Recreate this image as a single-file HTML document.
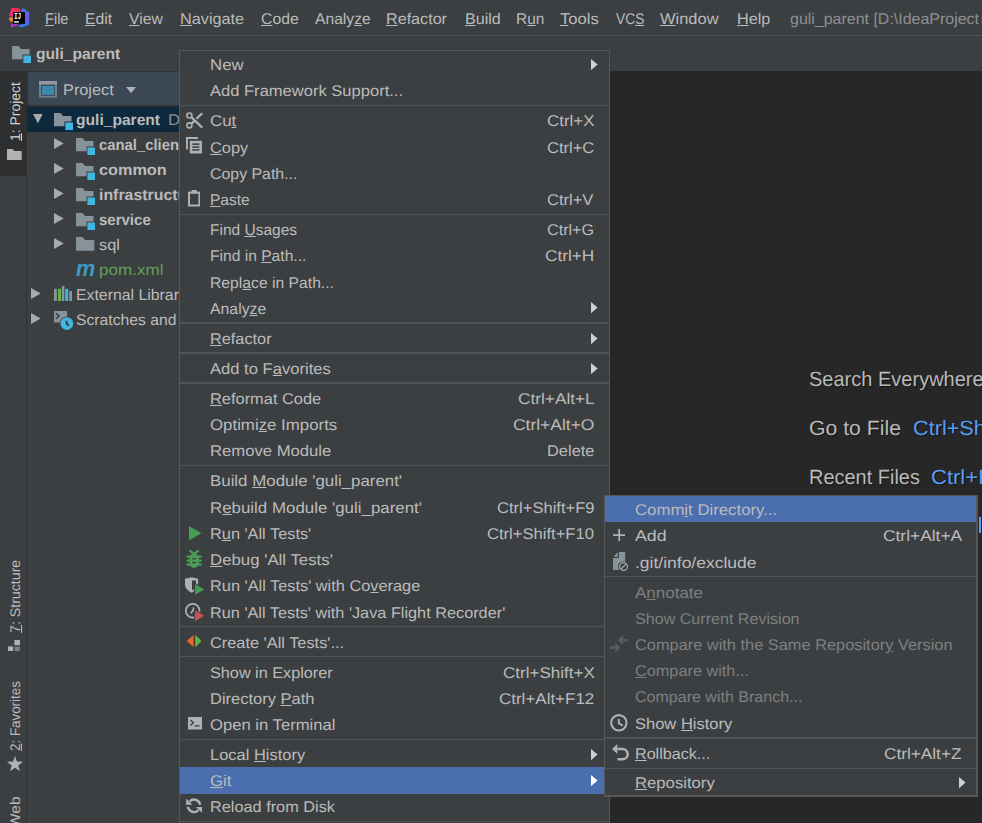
<!DOCTYPE html>
<html><head><meta charset='utf-8'><title>guli_parent</title>
<style>
html,body{margin:0;padding:0;background:#3c3f41}
body{width:982px;height:823px;overflow:hidden;position:relative;color:#bbbbbb}
.a{position:absolute;white-space:nowrap}
.t{position:absolute;white-space:nowrap;transform-origin:0 0}
.fm{font:15.5px/1 'Liberation Sans',sans-serif;text-rendering:geometricPrecision}
.fmb{font:bold 15.5px/1 'Liberation Sans',sans-serif;text-rendering:geometricPrecision}
.fbar{font:15.5px/1 'Liberation Sans',sans-serif;text-rendering:geometricPrecision}
.fed{font:20.6px/1 'Liberation Sans',sans-serif;text-rendering:geometricPrecision}
.fv{font:14px/1 'Liberation Sans',sans-serif;text-rendering:geometricPrecision}
.fmi{font:italic bold 23px/1 'Liberation Sans',sans-serif;text-rendering:geometricPrecision}
</style></head>
<body>
<!-- menu bar -->
<div class='a' style='left:0px;top:35px;width:982px;height:1px;background:#515151;'></div>
<span class='t fbar' style='left:44.7px;top:12px;transform:scaleX(0.940);'><u>F</u>ile</span>
<span class='t fbar' style='left:85.3px;top:12px;transform:scaleX(1.011);'><u>E</u>dit</span>
<span class='t fbar' style='left:129.0px;top:12px;transform:scaleX(1.018);'><u>V</u>iew</span>
<span class='t fbar' style='left:180.4px;top:12px;transform:scaleX(1.048);'><u>N</u>avigate</span>
<span class='t fbar' style='left:261.4px;top:12px;transform:scaleX(1.016);'><u>C</u>ode</span>
<span class='t fbar' style='left:315.1px;top:12px;transform:scaleX(1.009);'>Analy<u>z</u>e</span>
<span class='t fbar' style='left:386.4px;top:12px;transform:scaleX(1.041);'><u>R</u>efactor</span>
<span class='t fbar' style='left:465.3px;top:12px;transform:scaleX(1.038);'><u>B</u>uild</span>
<span class='t fbar' style='left:515.7px;top:12px;transform:scaleX(0.996);'>R<u>u</u>n</span>
<span class='t fbar' style='left:560.4px;top:12px;transform:scaleX(1.075);'><u>T</u>ools</span>
<span class='t fbar' style='left:616.3px;top:12px;transform:scaleX(0.888);'>VC<u>S</u></span>
<span class='t fbar' style='left:660.3px;top:12px;transform:scaleX(1.062);'><u>W</u>indow</span>
<span class='t fbar' style='left:736.9px;top:12px;transform:scaleX(1.047);'><u>H</u>elp</span>
<span class='t fbar' style='left:789.8px;top:12px;color:#8e9092;transform:scaleX(1.030);'>guli_parent [D:\IdeaProject</span><span class='t fbar' style='left:981.0px;top:12px;color:#8e9092;transform:scaleX(0.859);'>s\guli_parent]</span>
<svg class='a' style='left:8px;top:7px' width='22' height='22' viewBox='0 0 22 22'><defs><linearGradient id='lg1' x1='0' y1='0' x2='0' y2='1'><stop offset='0' stop-color='#3a78ee'/><stop offset='0.45' stop-color='#7256e8'/><stop offset='1' stop-color='#2a7df0'/></linearGradient><linearGradient id='lg2' x1='0' y1='0' x2='0' y2='1'><stop offset='0' stop-color='#fe2857'/><stop offset='1' stop-color='#e8308a'/></linearGradient></defs>
<polygon points='3.8,0.9 10.6,1.25 13,4.5 5.2,5.2 4.8,9.9 1.1,8.6 2.8,3.1' fill='url(#lg2)'/>
<polygon points='1.4,10.6 4.8,9.9 4.8,14.7 3.1,15 0.9,12.6' fill='#fc801d'/>
<polygon points='15,0.9 21.2,5.5 21.2,17.4 13.7,20.8 9.3,18.4 16.7,16.7 16.7,5.2 13,4.5 13,3.5' fill='url(#lg1)'/>
<polygon points='3.1,16.7 9.3,17.1 9.3,18.4 2.8,20.5' fill='#b030d0'/>
<rect x='5' y='5.2' width='11.9' height='11.5' fill='#000'/>
<rect x='6' y='14.2' width='5' height='1.5' fill='#e8e8e8'/>
<text x='5.9' y='11.9' font-size='8.8' font-weight='bold' fill='#fff' font-family='Liberation Mono, monospace' textLength='7.4' lengthAdjust='spacingAndGlyphs'>IJ</text></svg>
<!-- navigation bar -->
<svg class='a' style='left:12.2px;top:45.8px' width='19' height='17.1' viewBox='0 0 19 17.1'><path d='M0,0 H6.5 L9,3 H17.5 V8.5 H10.5 V13.2 H0 Z' fill='#87939a'/><rect x='11.4' y='9.5' width='7.6' height='7.6' fill='#40b6e0'/></svg>
<span class='t fmb' style='left:35.6px;top:47px;transform:scaleX(1.007);'>guli_parent</span>
<div class='a' style='left:0px;top:71px;width:982px;height:1px;background:#323232;'></div>
<!-- left tool window strip -->
<div class='a' style='left:0px;top:71px;width:27px;height:104.5px;background:#2d2f30;'></div>
<div class='a' style='left:26px;top:175.5px;width:1px;height:648px;background:#323335;'></div>
<span class='t fv' style='left:7.5px;top:140.6px;color:#d3d3d3;transform:rotate(-90deg) scaleX(0.997);'><u>1</u>: Project</span>
<svg class='a' style='left:7px;top:148.6px' width='14.7' height='11.6' viewBox='0 0 14.7 11.6'><path d='M0,0 H5.5 L7.5,2 H14.7 V11.6 H0 Z' fill='#afb1b3'/></svg>
<span class='t fv' style='left:7.5px;top:632.9px;transform:rotate(-90deg) scaleX(1.012);'><u>7</u>: Structure</span>
<svg class='a' style='left:8.3px;top:639.6px' width='12.3' height='11.6' viewBox='0 0 12.3 11.6'><rect x='6.4' y='0' width='5.6' height='5.2' fill='#afb1b3'/><rect x='0' y='6.4' width='5.2' height='5.2' fill='#afb1b3'/><rect x='6.6' y='6.6' width='5.2' height='5' fill='#7e8183'/></svg>
<span class='t fv' style='left:7.5px;top:750.7px;transform:rotate(-90deg) scaleX(0.955);'><u>2</u>: Favorites</span>
<svg class='a' style='left:6.6px;top:756.3px' width='16' height='15.3' viewBox='0 0 16 15.3'><polygon points='8,0 10,5.6 16,5.8 11.3,9.4 13,15.3 8,11.8 3,15.3 4.7,9.4 0,5.8 6,5.6' fill='#afb1b3'/></svg>
<span class='t fv' style='left:7.5px;top:828.0px;transform:rotate(-90deg) scaleX(1.107);'>Web</span>
<!-- project tool window -->
<div class='a' style='left:28px;top:72px;width:151px;height:33.3px;background:#3b4754;'></div>
<div class='a' style='left:27px;top:72px;width:1px;height:35px;background:#2e3133;'></div>
<div class='a' style='left:27px;top:105.3px;width:152px;height:1.7px;background:#2c3033;'></div>
<svg class='a' style='left:39px;top:81.3px' width='18' height='16.6' viewBox='0 0 18 16.6'><rect x='0' y='0' width='18' height='16.6' fill='#73808b'/><rect x='0' y='0' width='18' height='3.7' fill='#8c98a2'/><rect x='2.1' y='3.7' width='13.8' height='11.1' fill='#364250'/><rect x='3' y='4.9' width='12.2' height='9' fill='#3e8aab'/></svg>
<span class='t fm' style='left:63.1px;top:83px;transform:scaleX(1.052);'>Project</span>
<svg class='a' style='left:125.9px;top:87.3px' width='10.1' height='6.1' viewBox='0 0 10.1 6.1'><polygon points='0,0 10.1,0 5.05,6.1' fill='#afb1b3'/></svg>
<div class='a' style='left:27px;top:107px;width:152px;height:25px;background:#0d293e;'></div>
<svg class='a' style='left:32.6px;top:114.4px' width='9.8' height='9.2' viewBox='0 0 9.8 9.2'><polygon points='0,0 9.8,0 4.9,9.2' fill='#a8aaab'/></svg>
<svg class='a' style='left:54px;top:112.5px' width='19' height='17.1' viewBox='0 0 19 17.1'><path d='M0,0 H6.5 L9,3 H17.5 V8.5 H10.5 V13.2 H0 Z' fill='#87939a'/><rect x='11.4' y='9.5' width='7.6' height='7.6' fill='#40b6e0'/></svg>
<span class='t fmb' style='left:76.4px;top:113px;transform:scaleX(1.006);'>guli_parent</span>
<span class='t fm' style='left:167.9px;top:113px;color:#8e9092;transform:scaleX(1.080);'>D:\IdeaProjects\guli_parent</span>
<svg class='a' style='left:53.9px;top:138.3px' width='9.7' height='11' viewBox='0 0 9.7 11'><polygon points='0,0 9.7,5.5 0,11' fill='#a8aaab'/></svg>
<svg class='a' style='left:75.9px;top:137.7px' width='19' height='17.1' viewBox='0 0 19 17.1'><path d='M0,0 H6.5 L9,3 H17.5 V8.5 H10.5 V13.2 H0 Z' fill='#87939a'/><rect x='11.4' y='9.5' width='7.6' height='7.6' fill='#40b6e0'/></svg>
<span class='t fmb' style='left:99.4px;top:138px;transform:scaleX(0.957);'>canal_client</span>
<svg class='a' style='left:53.9px;top:163.3px' width='9.7' height='11' viewBox='0 0 9.7 11'><polygon points='0,0 9.7,5.5 0,11' fill='#a8aaab'/></svg>
<svg class='a' style='left:75.9px;top:162.7px' width='19' height='17.1' viewBox='0 0 19 17.1'><path d='M0,0 H6.5 L9,3 H17.5 V8.5 H10.5 V13.2 H0 Z' fill='#87939a'/><rect x='11.4' y='9.5' width='7.6' height='7.6' fill='#40b6e0'/></svg>
<span class='t fmb' style='left:99.4px;top:163px;transform:scaleX(1.048);'>common</span>
<svg class='a' style='left:53.9px;top:188.3px' width='9.7' height='11' viewBox='0 0 9.7 11'><polygon points='0,0 9.7,5.5 0,11' fill='#a8aaab'/></svg>
<svg class='a' style='left:75.9px;top:187.7px' width='19' height='17.1' viewBox='0 0 19 17.1'><path d='M0,0 H6.5 L9,3 H17.5 V8.5 H10.5 V13.2 H0 Z' fill='#87939a'/><rect x='11.4' y='9.5' width='7.6' height='7.6' fill='#40b6e0'/></svg>
<span class='t fmb' style='left:98.6px;top:188px;transform:scaleX(1.025);'>infrastructure</span>
<svg class='a' style='left:53.9px;top:213.3px' width='9.7' height='11' viewBox='0 0 9.7 11'><polygon points='0,0 9.7,5.5 0,11' fill='#a8aaab'/></svg>
<svg class='a' style='left:75.9px;top:212.7px' width='19' height='17.1' viewBox='0 0 19 17.1'><path d='M0,0 H6.5 L9,3 H17.5 V8.5 H10.5 V13.2 H0 Z' fill='#87939a'/><rect x='11.4' y='9.5' width='7.6' height='7.6' fill='#40b6e0'/></svg>
<span class='t fmb' style='left:99.4px;top:213px;transform:scaleX(0.968);'>service</span>
<svg class='a' style='left:53.9px;top:238.3px' width='9.7' height='11' viewBox='0 0 9.7 11'><polygon points='0,0 9.7,5.5 0,11' fill='#a8aaab'/></svg>
<svg class='a' style='left:75.9px;top:237.3px' width='19' height='14' viewBox='0 0 19 14'><path d='M0,0 H6.5 L9,3 H18.3 V13.8 H0 Z' fill='#87939a'/></svg>
<span class='t fm' style='left:99.4px;top:238px;transform:scaleX(1.058);'>sql</span>
<span class='t fmi' style='left:75.6px;top:257px;color:#3a9bc4;transform:scaleX(0.940);'>m</span>
<span class='t fm' style='left:98.6px;top:263px;color:#5fa157;transform:scaleX(1.100);'>pom.xml</span>
<svg class='a' style='left:31.4px;top:288.1px' width='9.7' height='11' viewBox='0 0 9.7 11'><polygon points='0,0 9.7,5.5 0,11' fill='#a8aaab'/></svg>
<svg class='a' style='left:53.9px;top:286px' width='18' height='15.1' viewBox='0 0 18 15.1'><rect x='0' y='2.8' width='2.9' height='12.3' fill='#87939a'/><rect x='4' y='2.8' width='3' height='12.3' fill='#62b543'/><rect x='7.8' y='0' width='2.6' height='15.1' fill='#87939a'/><rect x='11.3' y='2.8' width='2.9' height='12.3' fill='#40b6e0'/><rect x='15.2' y='5' width='2.8' height='10.1' fill='#87939a'/></svg>
<span class='t fm' style='left:76.3px;top:288px;transform:scaleX(1.021);'>External Libraries</span>
<svg class='a' style='left:31.4px;top:313.3px' width='9.7' height='11' viewBox='0 0 9.7 11'><polygon points='0,0 9.7,5.5 0,11' fill='#a8aaab'/></svg>
<svg class='a' style='left:53.9px;top:311px' width='20.2' height='19.9' viewBox='0 0 20.2 19.9'><rect x='0' y='0' width='13.1' height='11.4' fill='#87939a'/><path d='M1.9,2.3 L5.2,5 L1.9,7.8' stroke='#2f3436' fill='none' stroke-width='1.3'/><circle cx='12.9' cy='12.6' r='7.2' fill='#3c3f41'/><circle cx='12.9' cy='12.6' r='6.4' fill='#40b6e0'/><path d='M12.5,9.9 L12.8,12.9 L14.9,14.7' stroke='#26323a' fill='none' stroke-width='1.6'/></svg>
<span class='t fm' style='left:75.7px;top:313px;transform:scaleX(1.014);'>Scratches and Consoles</span>
<!-- editor empty state -->
<div class='a' style='left:610px;top:71px;width:372px;height:752px;background:#272727;'></div>
<span class='t fed' style='left:808.8px;top:370px;color:#b9b9b9;transform:scaleX(0.972);text-shadow:1px 1px 0 #141414;'>Search Everywhere</span><span class='t fed' style='left:1001.0px;top:370px;color:#589df6;transform:scaleX(1.000);text-shadow:1px 1px 0 #141414;'>Double Shift</span>
<span class='t fed' style='left:808.8px;top:419px;color:#b9b9b9;transform:scaleX(1.030);text-shadow:1px 1px 0 #141414;'>Go to File</span><span class='t fed' style='left:912.8px;top:419px;color:#589df6;transform:scaleX(1.052);text-shadow:1px 1px 0 #141414;'>Ctrl+Shift+N</span>
<span class='t fed' style='left:808.8px;top:468px;color:#b9b9b9;transform:scaleX(0.969);text-shadow:1px 1px 0 #141414;'>Recent Files</span><span class='t fed' style='left:930.6px;top:468px;color:#589df6;transform:scaleX(1.070);text-shadow:1px 1px 0 #141414;'>Ctrl+E</span>
<span class='t fed' style='left:808.8px;top:517px;color:#b9b9b9;transform:scaleX(1.000);text-shadow:1px 1px 0 #141414;'>Navigation Bar</span>
<div class='a' style='left:979px;top:517px;width:2.4px;height:16px;background:#589df6;'></div>
<!-- project view context menu -->
<div class='a' style='left:179px;top:50px;width:431px;height:810px;background:#3c3f41;border:solid #555759;border-width:1px;box-sizing:border-box'></div>
<span class='t fm' style='left:209.7px;top:58px;transform:scaleX(1.085);'>New</span>
<svg class='a' style='left:591px;top:58.5px' width='6.6' height='11.2' viewBox='0 0 6.6 11.2'><polygon points='0,0 6.6,5.6 0,11.2' fill='#cfcfcf'/></svg>
<span class='t fm' style='left:209.7px;top:84px;transform:scaleX(1.067);'>Add Framework Support...</span>
<div class='a' style='left:180px;top:105px;width:429px;height:1px;background:#525354;'></div>
<svg class='a' style='left:185.7px;top:111.5px' width='17' height='17' viewBox='0 0 17 17'><circle cx='3.4' cy='3.5' r='2.5' fill='none' stroke='#afb1b3' stroke-width='1.6'/><circle cx='3.4' cy='13.4' r='2.5' fill='none' stroke='#afb1b3' stroke-width='1.6'/><path d='M5.2,5 L16.3,15.6 M5.2,11.9 L9,8.3 M10.6,6.8 L16.3,1.2' stroke='#afb1b3' stroke-width='2.3' fill='none'/></svg>
<span class='t fm' style='left:209.7px;top:114px;transform:scaleX(1.089);'>Cu<u>t</u></span><span class='t fm' style='left:547.4px;top:114px;transform:scaleX(1.091);'>Ctrl+X</span>
<svg class='a' style='left:186px;top:137px' width='16' height='16.6' viewBox='0 0 16 16.6'><path d='M0,0 H12 V2 H1.9 V12.6 H0 Z' fill='#afb1b3'/><rect x='3.8' y='3.8' width='12.1' height='12.7' fill='#afb1b3'/><rect x='6.2' y='6.4' width='7.2' height='1.5' fill='#3c3f41'/><rect x='6.2' y='9.3' width='7.2' height='1.5' fill='#3c3f41'/><rect x='6.2' y='12.2' width='7.2' height='1.5' fill='#3c3f41'/></svg>
<span class='t fm' style='left:209.7px;top:141px;transform:scaleX(1.059);'><u>C</u>opy</span><span class='t fm' style='left:547.4px;top:141px;transform:scaleX(1.066);'>Ctrl+C</span>
<span class='t fm' style='left:209.7px;top:167px;transform:scaleX(1.025);'>Copy Path...</span>
<svg class='a' style='left:187.7px;top:190.4px' width='12.4' height='16.5' viewBox='0 0 12.4 16.5'><rect x='1' y='2.6' width='10.4' height='12.9' fill='none' stroke='#afb1b3' stroke-width='2'/><rect x='3.6' y='0' width='5.2' height='3.4' fill='#afb1b3'/></svg>
<span class='t fm' style='left:209.7px;top:193px;transform:scaleX(1.003);'><u>P</u>aste</span><span class='t fm' style='left:547.4px;top:193px;transform:scaleX(1.066);'>Ctrl+V</span>
<div class='a' style='left:180px;top:214px;width:429px;height:1px;background:#525354;'></div>
<span class='t fm' style='left:209.7px;top:223px;transform:scaleX(1.001);'>Find <u>U</u>sages</span><span class='t fm' style='left:547.4px;top:223px;transform:scaleX(1.042);'>Ctrl+G</span>
<span class='t fm' style='left:209.7px;top:249px;transform:scaleX(1.007);'>Find in <u>P</u>ath...</span><span class='t fm' style='left:545.4px;top:249px;transform:scaleX(1.111);'>Ctrl+H</span>
<span class='t fm' style='left:209.7px;top:276px;transform:scaleX(1.013);'>Repl<u>a</u>ce in Path...</span>
<span class='t fm' style='left:209.7px;top:302px;transform:scaleX(1.020);'>Analy<u>z</u>e</span>
<svg class='a' style='left:591px;top:302.4px' width='6.6' height='11.2' viewBox='0 0 6.6 11.2'><polygon points='0,0 6.6,5.6 0,11.2' fill='#cfcfcf'/></svg>
<div class='a' style='left:180px;top:322px;width:429px;height:2px;background:#525354;'></div>
<span class='t fm' style='left:209.7px;top:332px;transform:scaleX(1.051);'><u>R</u>efactor</span>
<svg class='a' style='left:591px;top:332.7px' width='6.6' height='11.2' viewBox='0 0 6.6 11.2'><polygon points='0,0 6.6,5.6 0,11.2' fill='#cfcfcf'/></svg>
<div class='a' style='left:180px;top:352px;width:429px;height:2px;background:#525354;'></div>
<span class='t fm' style='left:209.7px;top:362px;transform:scaleX(1.070);'>Add to F<u>a</u>vorites</span>
<svg class='a' style='left:591px;top:362.5px' width='6.6' height='11.2' viewBox='0 0 6.6 11.2'><polygon points='0,0 6.6,5.6 0,11.2' fill='#cfcfcf'/></svg>
<div class='a' style='left:180px;top:382px;width:429px;height:2px;background:#525354;'></div>
<span class='t fm' style='left:209.7px;top:392px;transform:scaleX(1.058);'><u>R</u>eformat Code</span><span class='t fm' style='left:517.5px;top:392px;transform:scaleX(1.113);'>Ctrl+Alt+L</span>
<span class='t fm' style='left:209.7px;top:418px;transform:scaleX(1.086);'>Optimi<u>z</u>e Imports</span><span class='t fm' style='left:513.3px;top:418px;transform:scaleX(1.125);'>Ctrl+Alt+O</span>
<span class='t fm' style='left:209.7px;top:444px;transform:scaleX(1.075);'>Remove Module</span><span class='t fm' style='left:546.6px;top:444px;transform:scaleX(1.059);'>Delete</span>
<div class='a' style='left:180px;top:465px;width:429px;height:1px;background:#525354;'></div>
<span class='t fm' style='left:209.7px;top:474px;transform:scaleX(1.088);'>Build <u>M</u>odule 'guli_parent'</span>
<span class='t fm' style='left:209.7px;top:501px;transform:scaleX(1.089);'>R<u>e</u>build Module 'guli_parent'</span><span class='t fm' style='left:497.1px;top:501px;transform:scaleX(1.068);'>Ctrl+Shift+F9</span>
<svg class='a' style='left:188.9px;top:525.6px' width='12.3' height='14.6' viewBox='0 0 12.3 14.6'><polygon points='0,0 12.3,7.3 0,14.6' fill='#499c54'/></svg>
<span class='t fm' style='left:209.7px;top:527px;transform:scaleX(1.053);'>R<u>u</u>n 'All Tests'</span><span class='t fm' style='left:487.3px;top:527px;transform:scaleX(1.070);'>Ctrl+Shift+F10</span>
<svg class='a' style='left:186px;top:550px' width='16.2' height='18' viewBox='0 0 16.2 18'><rect x='3.3' y='3.3' width='9.6' height='14.7' rx='4.8' ry='5.6' fill='#499c54'/><path d='M4.1,0.9 L7.6,3.6 M12.1,0.9 L8.6,3.6 M1.4,6.6 H14.8 M1.4,10.6 H14.8 M1.4,14.6 H14.8' stroke='#499c54' stroke-width='2.2' stroke-linecap='round'/><rect x='6.1' y='8.1' width='3.9' height='1.3' fill='#3c3f41'/><rect x='6.1' y='11.9' width='3.9' height='1.3' fill='#3c3f41'/></svg>
<span class='t fm' style='left:209.7px;top:553px;transform:scaleX(1.084);'><u>D</u>ebug 'All Tests'</span>
<svg class='a' style='left:184.9px;top:577px' width='21' height='20' viewBox='0 0 21 20'><path d='M0,1.7 L6.6,0.2 L13.1,1.7 V7.5 Q13.1,12.5 6.6,15.7 Q0,12.5 0,7.5 Z' fill='#afb1b3'/><path d='M7,3.4 H11 V8 Q11,11.5 7,13.4 Z' fill='#3c3f41'/><polygon points='9.2,5.2 9.2,19.6 20.9,12.4' fill='#3c3f41'/><polygon points='10.1,6.9 10.1,17.85 19.1,12.4' fill='#499c54'/></svg>
<span class='t fm' style='left:209.7px;top:579px;transform:scaleX(1.054);'>Run 'All Tests' with Co<u>v</u>erage</span>
<svg class='a' style='left:184.9px;top:602.6px' width='21' height='20' viewBox='0 0 21 20'><circle cx='7.7' cy='7.75' r='6.85' fill='none' stroke='#afb1b3' stroke-width='1.7'/><path d='M8.47,4.4 L8.33,7 L5.85,10.2' stroke='#afb1b3' stroke-width='1.7' fill='none'/><polygon points='9.2,5.6 9.2,20 20.9,12.8' fill='#3c3f41'/><polygon points='10.1,7.3 10.1,18.25 19.1,12.8' fill='#c75450'/></svg>
<span class='t fm' style='left:209.7px;top:606px;transform:scaleX(1.050);'>Run 'All Tests' with 'Java Flight Recorder'</span>
<div class='a' style='left:180px;top:626px;width:429px;height:1px;background:#525354;'></div>
<svg class='a' style='left:186.6px;top:634.8px' width='14.8' height='12.2' viewBox='0 0 14.8 12.2'><polygon points='0,6.1 6.5,0 6.5,12.2' fill='#f26522'/><polygon points='14.8,6.1 8.2,0 8.2,12.2' fill='#62b543'/></svg>
<span class='t fm' style='left:209.7px;top:636px;transform:scaleX(1.055);'>Create 'All Tests'...</span>
<div class='a' style='left:180px;top:656px;width:429px;height:1px;background:#525354;'></div>
<span class='t fm' style='left:209.7px;top:666px;transform:scaleX(1.047);'>Show in Explorer</span><span class='t fm' style='left:503.0px;top:666px;transform:scaleX(1.100);'>Ctrl+Shift+X</span>
<span class='t fm' style='left:209.7px;top:692px;transform:scaleX(1.064);'>Directory <u>P</u>ath</span><span class='t fm' style='left:499.0px;top:692px;transform:scaleX(1.095);'>Ctrl+Alt+F12</span>
<svg class='a' style='left:187.9px;top:717.2px' width='14.1' height='12.5' viewBox='0 0 14.1 12.5'><rect x='0' y='0' width='14.1' height='12.5' fill='#afb1b3'/><path d='M2.4,3 L5.4,5.7 L2.4,8.4' stroke='#3c3f41' stroke-width='1.3' fill='none'/><rect x='6.6' y='8.2' width='5' height='1.3' fill='#3c3f41'/></svg>
<span class='t fm' style='left:209.7px;top:718px;transform:scaleX(1.073);'>Open in Terminal</span>
<div class='a' style='left:180px;top:739px;width:429px;height:1px;background:#525354;'></div>
<span class='t fm' style='left:209.7px;top:748px;transform:scaleX(1.062);'>Local <u>H</u>istory</span>
<svg class='a' style='left:591px;top:748.7px' width='6.6' height='11.2' viewBox='0 0 6.6 11.2'><polygon points='0,0 6.6,5.6 0,11.2' fill='#cfcfcf'/></svg>
<div class='a' style='left:180px;top:767px;width:425px;height:27px;background:#4b6eaf;'></div>
<span class='t fm' style='left:209.7px;top:774px;transform:scaleX(1.081);'><u>G</u>it</span>
<svg class='a' style='left:591px;top:774.5px' width='6.6' height='11.2' viewBox='0 0 6.6 11.2'><polygon points='0,0 6.6,5.6 0,11.2' fill='#ffffff'/></svg>
<svg class='a' style='left:185.9px;top:798.2px' width='16.4' height='16' viewBox='0 0 16.4 16'><path d='M14.2,6.7 A6.25,6.25 0 0 0 3.63,3.38' stroke='#afb1b3' stroke-width='2.4' fill='none'/><polygon points='0.1,0.6 0.1,6.7 6.4,6.7' fill='#afb1b3'/><path d='M1.9,8.9 A6.25,6.25 0 0 0 12.47,12.22' stroke='#afb1b3' stroke-width='2.4' fill='none'/><polygon points='16.2,8.9 9.8,8.9 16.2,14.9' fill='#afb1b3'/></svg>
<span class='t fm' style='left:209.7px;top:800px;transform:scaleX(1.051);'>Reload from Disk</span>
<div class='a' style='left:180px;top:821px;width:429px;height:1px;background:#525354;'></div>
<!-- Git submenu -->
<div class='a' style='left:604px;top:495px;width:374px;height:302px;background:#3c3f41;border:solid #555759;border-width:1px 2px 2px 1px;box-sizing:border-box'></div>
<div class='a' style='left:605px;top:496px;width:371px;height:26px;background:#4b6eaf;'></div>
<span class='t fm' style='left:634.9px;top:503px;transform:scaleX(1.081);'>Comm<u>i</u>t Directory...</span>
<svg class='a' style='left:612.8px;top:529px' width='12.4' height='12.4' viewBox='0 0 12.4 12.4'><path d='M6.2,0 V12.4 M0,6.2 H12.4' stroke='#afb1b3' stroke-width='1.7'/></svg>
<span class='t fm' style='left:634.9px;top:529px;transform:scaleX(1.146);'>Add</span><span class='t fm' style='left:882.5px;top:529px;transform:scaleX(1.120);'>Ctrl+Alt+A</span>
<svg class='a' style='left:613px;top:551.9px' width='16' height='20' viewBox='0 0 16 20'><path d='M6,0 H12.2 V18 H0 V6 H6 Z' fill='#87939a'/><path d='M0.3,4.8 L4.9,0.2 V4.8 Z' fill='#87939a'/><circle cx='10.5' cy='14.6' r='5.4' fill='#3c3f41'/><circle cx='10.5' cy='14.6' r='3.9' fill='none' stroke='#9aa7b0' stroke-width='1.3'/><path d='M7.8,17.3 L13.2,11.9' stroke='#9aa7b0' stroke-width='1.3'/></svg>
<span class='t fm' style='left:634.9px;top:556px;transform:scaleX(1.128);'>.git/info/exclude</span>
<div class='a' style='left:605px;top:576px;width:372px;height:1px;background:#525354;'></div>
<span class='t fm' style='left:634.9px;top:586px;color:#7d8082;transform:scaleX(1.096);'>A<u>n</u>notate</span>
<span class='t fm' style='left:634.9px;top:612px;color:#7d8082;transform:scaleX(1.038);'>Show Current Revision</span>
<svg class='a' style='left:609.9px;top:635.1px' width='18.1' height='17.8' viewBox='0 0 18.1 17.8'><polygon points='7.7,5.2 13,0 13,9.9' fill='#5a5d5f'/><rect x='13' y='3.9' width='5.1' height='2.5' fill='#5a5d5f'/><polygon points='10.4,12.4 5.3,7.8 5.3,17.8' fill='#5a5d5f'/><rect x='0' y='11.2' width='5.3' height='2.6' fill='#5a5d5f'/></svg>
<span class='t fm' style='left:634.9px;top:638px;color:#7d8082;transform:scaleX(1.056);'>Compare with the Same Repositor<u>y</u> Version</span>
<span class='t fm' style='left:634.9px;top:664px;color:#7d8082;transform:scaleX(1.050);'><u>C</u>ompare with...</span>
<span class='t fm' style='left:634.9px;top:690px;color:#7d8082;transform:scaleX(1.034);'>Compare with Branch...</span>
<svg class='a' style='left:610.1px;top:714.1px' width='17.8' height='17.7' viewBox='0 0 17.8 17.7'><circle cx='8.86' cy='8.8' r='7.7' fill='none' stroke='#afb1b3' stroke-width='2.1'/><path d='M8.86,4.95 V9.3 L12.65,11.65' stroke='#afb1b3' stroke-width='2' fill='none'/></svg>
<span class='t fm' style='left:634.9px;top:717px;transform:scaleX(1.065);'>Show <u>H</u>istory</span>
<div class='a' style='left:605px;top:737px;width:372px;height:2px;background:#525354;'></div>
<svg class='a' style='left:611.5px;top:744.2px' width='17.2' height='16.6' viewBox='0 0 17.2 16.6'><path d='M5.4,5.1 H10.6 A5.05,5.05 0 0 1 10.6,15.2 H5.4' stroke='#afb1b3' stroke-width='2.5' fill='none'/><polygon points='0,5.1 5.4,0 5.4,9.9' fill='#afb1b3'/></svg>
<span class='t fm' style='left:634.9px;top:747px;transform:scaleX(1.040);'><u>R</u>ollback...</span><span class='t fm' style='left:884.3px;top:747px;transform:scaleX(1.110);'>Ctrl+Alt+Z</span>
<div class='a' style='left:605px;top:768px;width:372px;height:1px;background:#525354;'></div>
<span class='t fm' style='left:634.9px;top:776px;transform:scaleX(1.076);'><u>R</u>epository</span>
<svg class='a' style='left:959.1px;top:777.4px' width='6.6' height='11.2' viewBox='0 0 6.6 11.2'><polygon points='0,0 6.6,5.6 0,11.2' fill='#cfcfcf'/></svg>
</body></html>
